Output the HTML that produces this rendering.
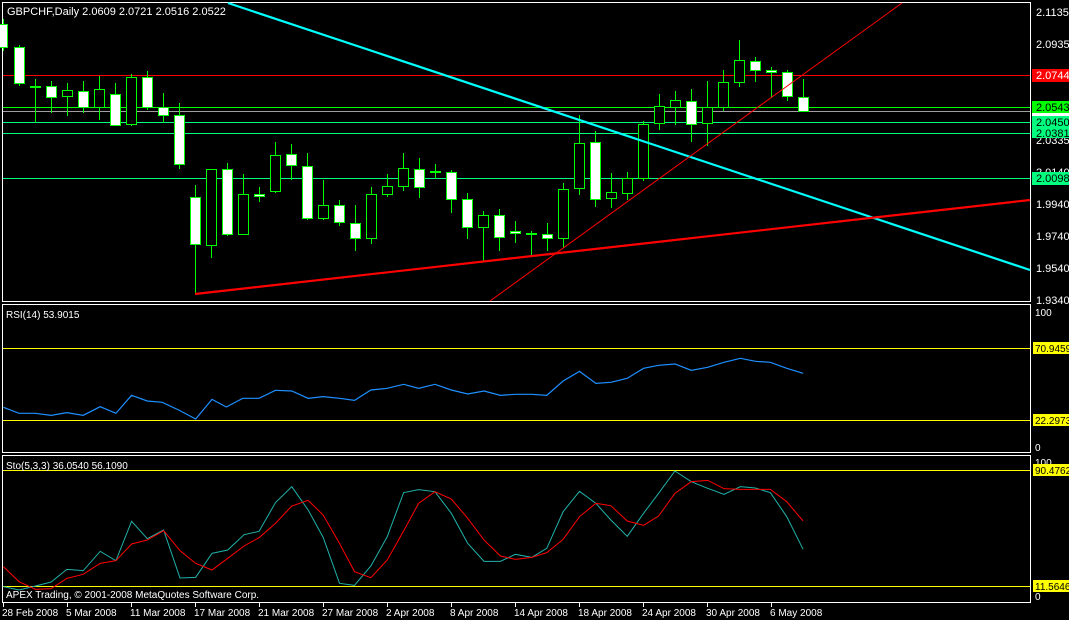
<!DOCTYPE html>
<html><head><meta charset="utf-8"><style>
html,body{margin:0;padding:0;background:#000;width:1069px;height:620px;overflow:hidden}
svg{display:block}
text{font-family:"Liberation Sans",sans-serif;font-size:11px;fill:#fff}
</style></head><body>
<svg width="1069" height="620" viewBox="0 0 1069 620" xmlns="http://www.w3.org/2000/svg" shape-rendering="crispEdges">
<rect width="1069" height="620" fill="#000"/>
<!-- panels -->
<rect x="2.5" y="2.5" width="1028" height="299" fill="none" stroke="#fff"/>
<rect x="2.5" y="304.5" width="1028" height="148" fill="none" stroke="#fff"/>
<rect x="2.5" y="455.5" width="1028" height="147" fill="none" stroke="#fff"/>

<!-- horizontal lines main -->
<line x1="3" y1="75.5" x2="1030" y2="75.5" stroke="#ff0000"/>
<line x1="3" y1="107.5" x2="1030" y2="107.5" stroke="#00ff00"/>
<line x1="3" y1="111.5" x2="1030" y2="111.5" stroke="#a0a0a0"/>
<line x1="3" y1="122.5" x2="1030" y2="122.5" stroke="#00ff7f"/>
<line x1="3" y1="133.5" x2="1030" y2="133.5" stroke="#00ff7f"/>
<line x1="3" y1="178.5" x2="1030" y2="178.5" stroke="#00ff7f"/>

<!-- candles -->
<g stroke="#00ff00" stroke-width="1">
<line x1="3.5" y1="19" x2="3.5" y2="51"/><rect x="-1.5" y="24.5" width="9" height="23" fill="#fff"/>
<line x1="19.5" y1="45" x2="19.5" y2="86"/><rect x="14.5" y="47.5" width="10" height="36" fill="#fff"/>
<line x1="35.5" y1="79" x2="35.5" y2="122"/><rect x="30.5" y="86.5" width="10" height="1" fill="#fff"/>
<line x1="51.5" y1="81" x2="51.5" y2="113"/><rect x="46.5" y="86.5" width="10" height="11" fill="#fff"/>
<line x1="67.5" y1="83" x2="67.5" y2="116"/><rect x="62.5" y="90.5" width="10" height="6" fill="#000"/>
<line x1="83.5" y1="81" x2="83.5" y2="113"/><rect x="78.5" y="91.5" width="10" height="16" fill="#fff"/>
<line x1="99.5" y1="76" x2="99.5" y2="120"/><rect x="94.5" y="89.5" width="10" height="18" fill="#000"/>
<line x1="115.5" y1="83" x2="115.5" y2="125"/><rect x="110.5" y="94.5" width="10" height="31" fill="#fff"/>
<line x1="131.5" y1="74" x2="131.5" y2="126"/><rect x="126.5" y="77.5" width="10" height="47" fill="#000"/>
<line x1="147.5" y1="71" x2="147.5" y2="110"/><rect x="142.5" y="77.5" width="10" height="30" fill="#fff"/>
<line x1="163.5" y1="93" x2="163.5" y2="122"/><rect x="158.5" y="107.5" width="10" height="8" fill="#fff"/>
<line x1="179.5" y1="103" x2="179.5" y2="169"/><rect x="174.5" y="115.5" width="10" height="49" fill="#fff"/>
<line x1="195.5" y1="185" x2="195.5" y2="293"/><rect x="190.5" y="197.5" width="10" height="47" fill="#fff"/>
<line x1="211.5" y1="169" x2="211.5" y2="258"/><rect x="206.5" y="169.5" width="10" height="76" fill="#000"/>
<line x1="227.5" y1="163" x2="227.5" y2="236"/><rect x="222.5" y="169.5" width="10" height="65" fill="#fff"/>
<line x1="243.5" y1="174" x2="243.5" y2="234"/><rect x="238.5" y="194.5" width="10" height="40" fill="#000"/>
<line x1="259.5" y1="187" x2="259.5" y2="202"/><rect x="254.5" y="194.5" width="10" height="2" fill="#fff"/>
<line x1="275.5" y1="142" x2="275.5" y2="193"/><rect x="270.5" y="155.5" width="10" height="36" fill="#000"/>
<line x1="291.5" y1="144" x2="291.5" y2="180"/><rect x="286.5" y="154.5" width="10" height="11" fill="#fff"/>
<line x1="307.5" y1="153" x2="307.5" y2="220"/><rect x="302.5" y="166.5" width="10" height="52" fill="#fff"/>
<line x1="323.5" y1="180" x2="323.5" y2="220"/><rect x="318.5" y="205.5" width="10" height="13" fill="#000"/>
<line x1="339.5" y1="200" x2="339.5" y2="226"/><rect x="334.5" y="205.5" width="10" height="17" fill="#fff"/>
<line x1="355.5" y1="205" x2="355.5" y2="251"/><rect x="350.5" y="223.5" width="10" height="15" fill="#fff"/>
<line x1="371.5" y1="187" x2="371.5" y2="244"/><rect x="366.5" y="194.5" width="10" height="44" fill="#000"/>
<line x1="387.5" y1="174" x2="387.5" y2="197"/><rect x="382.5" y="186.5" width="10" height="8" fill="#000"/>
<line x1="403.5" y1="153" x2="403.5" y2="191"/><rect x="398.5" y="168.5" width="10" height="18" fill="#000"/>
<line x1="419.5" y1="158" x2="419.5" y2="198"/><rect x="414.5" y="169.5" width="10" height="18" fill="#fff"/>
<line x1="435.5" y1="164" x2="435.5" y2="178"/><rect x="430.5" y="171.5" width="10" height="1" fill="#fff"/>
<line x1="451.5" y1="170" x2="451.5" y2="213"/><rect x="446.5" y="172.5" width="10" height="27" fill="#fff"/>
<line x1="467.5" y1="193" x2="467.5" y2="239"/><rect x="462.5" y="199.5" width="10" height="28" fill="#fff"/>
<line x1="483.5" y1="211" x2="483.5" y2="262"/><rect x="478.5" y="215.5" width="10" height="12" fill="#000"/>
<line x1="499.5" y1="209" x2="499.5" y2="251"/><rect x="494.5" y="215.5" width="10" height="22" fill="#fff"/>
<line x1="515.5" y1="221" x2="515.5" y2="243"/><rect x="510.5" y="231.5" width="10" height="2" fill="#fff"/>
<line x1="531.5" y1="231" x2="531.5" y2="256"/><rect x="526.5" y="233.5" width="10" height="1" fill="#fff"/>
<line x1="547.5" y1="223" x2="547.5" y2="251"/><rect x="542.5" y="234.5" width="10" height="4" fill="#fff"/>
<line x1="563.5" y1="183" x2="563.5" y2="248"/><rect x="558.5" y="189.5" width="10" height="49" fill="#000"/>
<line x1="579.5" y1="115" x2="579.5" y2="195"/><rect x="574.5" y="143.5" width="10" height="45" fill="#000"/>
<line x1="595.5" y1="131" x2="595.5" y2="207"/><rect x="590.5" y="142.5" width="10" height="57" fill="#fff"/>
<line x1="611.5" y1="173" x2="611.5" y2="208"/><rect x="606.5" y="192.5" width="10" height="6" fill="#000"/>
<line x1="627.5" y1="172" x2="627.5" y2="200"/><rect x="622.5" y="178.5" width="10" height="15" fill="#000"/>
<line x1="643.5" y1="121" x2="643.5" y2="181"/><rect x="638.5" y="124.5" width="10" height="54" fill="#000"/>
<line x1="659.5" y1="94" x2="659.5" y2="130"/><rect x="654.5" y="106.5" width="10" height="17" fill="#000"/>
<line x1="675.5" y1="91" x2="675.5" y2="125"/><rect x="670.5" y="100.5" width="10" height="7" fill="#000"/>
<line x1="691.5" y1="89" x2="691.5" y2="142"/><rect x="686.5" y="101.5" width="10" height="23" fill="#fff"/>
<line x1="707.5" y1="81" x2="707.5" y2="146"/><rect x="702.5" y="107.5" width="10" height="16" fill="#000"/>
<line x1="723.5" y1="70" x2="723.5" y2="111"/><rect x="718.5" y="82.5" width="10" height="25" fill="#000"/>
<line x1="739.5" y1="40" x2="739.5" y2="87"/><rect x="734.5" y="60.5" width="10" height="22" fill="#000"/>
<line x1="755.5" y1="57" x2="755.5" y2="82"/><rect x="750.5" y="61.5" width="10" height="9" fill="#fff"/>
<line x1="771.5" y1="67" x2="771.5" y2="98"/><rect x="766.5" y="70.5" width="10" height="2" fill="#fff"/>
<line x1="787.5" y1="70" x2="787.5" y2="101"/><rect x="782.5" y="72.5" width="10" height="24" fill="#fff"/>
<line x1="803.5" y1="79" x2="803.5" y2="111"/><rect x="798.5" y="97.5" width="10" height="14" fill="#fff"/>
</g>

<!-- trend lines -->
<g shape-rendering="auto">
<line x1="228" y1="3" x2="1030" y2="270" stroke="#00ffff" stroke-width="2.2"/>
<line x1="195" y1="294" x2="1030" y2="200" stroke="#ff0000" stroke-width="2.2"/>
<line x1="490" y1="301" x2="902" y2="3" stroke="#ff0000" stroke-width="1"/>
</g>

<!-- price axis -->
<g>
<text x="1036" y="16">2.1135</text>
<text x="1036" y="48">2.0935</text>
<rect x="1032" y="69" width="37" height="13" fill="#ff0000"/>
<text x="1036" y="79">2.0744</text>
<rect x="1032" y="112" width="37" height="4" fill="#fff"/>
<text x="1036" y="144">2.0335</text>
<text x="1036" y="176">2.0140</text>
<rect x="1032" y="101" width="37" height="12" fill="#00ff00"/>
<text x="1036" y="111" style="fill:#000">2.0543</text>
<rect x="1032" y="116" width="37" height="22" fill="#00ff7f"/>
<text x="1036" y="126" style="fill:#000">2.0450</text>
<text x="1036" y="137" style="fill:#000">2.0381</text>
<rect x="1032" y="172" width="37" height="13" fill="#00ff7f"/>
<text x="1036" y="182" style="fill:#000">2.0098</text>
<text x="1036" y="208">1.9940</text>
<text x="1036" y="240">1.9740</text>
<text x="1036" y="272">1.9540</text>
<text x="1036" y="304">1.9340</text>
</g>
<text x="7" y="15">GBPCHF,Daily  2.0609 2.0721 2.0516 2.0522</text>

<!-- RSI -->
<line x1="3" y1="348.5" x2="1030" y2="348.5" stroke="#ffff00"/>
<line x1="3" y1="420.5" x2="1030" y2="420.5" stroke="#ffff00"/>
<text x="6" y="318" style="font-size:10px">RSI(14) 53.9015</text>
<text x="1035" y="316" style="font-size:10px">100</text>
<text x="1035" y="451" style="font-size:10px">0</text>
<rect x="1033" y="342" width="36" height="12" fill="#ffff00"/>
<text x="1035" y="352" style="fill:#000;font-size:10px">70.9459</text>
<rect x="1033" y="414" width="36" height="12" fill="#ffff00"/>
<text x="1035" y="424" style="fill:#000;font-size:10px">22.2973</text>

<!-- Stoch -->
<line x1="3" y1="470.5" x2="1030" y2="470.5" stroke="#ffff00"/>
<line x1="3" y1="586.5" x2="1030" y2="586.5" stroke="#ffff00"/>
<text x="6" y="469" style="font-size:10px">Sto(5,3,3) 36.0540 56.1090</text>
<text x="1035" y="466" style="font-size:10px">100</text>
<text x="1035" y="600" style="font-size:10px">0</text>
<rect x="1033" y="464" width="36" height="12" fill="#ffff00"/>
<text x="1035" y="474" style="fill:#000;font-size:10px">90.4762</text>
<rect x="1033" y="580" width="36" height="12" fill="#ffff00"/>
<text x="1035" y="590" style="fill:#000;font-size:10px">11.5646</text>
<text x="6" y="598" style="font-size:10px">APEX Trading, © 2001-2008 MetaQuotes Software Corp.</text>

<g transform="matrix(0.68176 0 0 0.33333 0 300)" fill="none" shape-rendering="auto">
<polyline vector-effect="non-scaling-stroke" stroke="#1e90ff" stroke-width="1.2" points="5,322 28,340 52,340 75,346 98,338 122,346 147,320 170,340 193,286 216,303 238,307 262,330 287,357 311,298 332,321 356,295 380,295 404,271 428,273 452,295 474,290 498,295 520,301 544,270 568,265 592,253 614,265 638,253 662,270 686,282 710,273 734,286 756,283 780,283 802,286 826,243 850,214 874,250 896,247 920,235 944,205 966,196 990,192 1014,211 1038,202 1062,187 1086,175 1108,184 1130,187 1154,205 1178,220"/>
<polyline vector-effect="non-scaling-stroke" stroke="#20b2aa" stroke-width="1" points="5,860 28,870 52,858 75,846 98,808 122,812 147,754 170,782 193,664 216,716 240,690 264,834 287,832 311,760 334,750 358,704 380,694 404,608 428,560 452,630 474,712 498,850 520,856 544,798 568,710 592,578 614,569 638,575 662,640 686,730 710,784 734,784 756,763 780,772 802,745 826,635 850,574 874,610 896,660 920,709 944,640 966,580 990,513 1014,545 1038,565 1062,583 1086,560 1108,564 1130,578 1154,650 1178,748"/>
<polyline vector-effect="non-scaling-stroke" stroke="#ff0000" stroke-width="1" points="5,800 28,845 52,868 75,866 98,835 122,823 147,790 170,782 193,732 216,720 240,692 264,752 287,790 311,810 334,775 358,738 380,713 404,670 428,618 452,601 474,645 498,730 520,815 544,833 568,780 592,693 614,610 638,575 662,597 686,655 710,720 734,768 756,778 780,772 802,758 826,718 850,650 874,610 896,617 920,663 944,676 966,648 990,580 1014,545 1038,541 1062,566 1086,568 1108,568 1130,568 1154,605 1178,663"/>
</g>

<!-- time axis -->
<g stroke="#fff">
<line x1="3.5" y1="603" x2="3.5" y2="607"/><line x1="67.5" y1="603" x2="67.5" y2="607"/><line x1="131.5" y1="603" x2="131.5" y2="607"/><line x1="195.5" y1="603" x2="195.5" y2="607"/><line x1="259.5" y1="603" x2="259.5" y2="607"/><line x1="323.5" y1="603" x2="323.5" y2="607"/><line x1="387.5" y1="603" x2="387.5" y2="607"/><line x1="451.5" y1="603" x2="451.5" y2="607"/><line x1="515.5" y1="603" x2="515.5" y2="607"/><line x1="579.5" y1="603" x2="579.5" y2="607"/><line x1="643.5" y1="603" x2="643.5" y2="607"/><line x1="707.5" y1="603" x2="707.5" y2="607"/><line x1="771.5" y1="603" x2="771.5" y2="607"/>
</g>
<g style="font-size:10px">
<text x="2" y="616" style="font-size:10px">28 Feb 2008</text>
<text x="66" y="616" style="font-size:10px">5 Mar 2008</text>
<text x="130" y="616" style="font-size:10px">11 Mar 2008</text>
<text x="194" y="616" style="font-size:10px">17 Mar 2008</text>
<text x="258" y="616" style="font-size:10px">21 Mar 2008</text>
<text x="322" y="616" style="font-size:10px">27 Mar 2008</text>
<text x="386" y="616" style="font-size:10px">2 Apr 2008</text>
<text x="450" y="616" style="font-size:10px">8 Apr 2008</text>
<text x="514" y="616" style="font-size:10px">14 Apr 2008</text>
<text x="578" y="616" style="font-size:10px">18 Apr 2008</text>
<text x="642" y="616" style="font-size:10px">24 Apr 2008</text>
<text x="706" y="616" style="font-size:10px">30 Apr 2008</text>
<text x="770" y="616" style="font-size:10px">6 May 2008</text>
</g>
</svg>
</body></html>
